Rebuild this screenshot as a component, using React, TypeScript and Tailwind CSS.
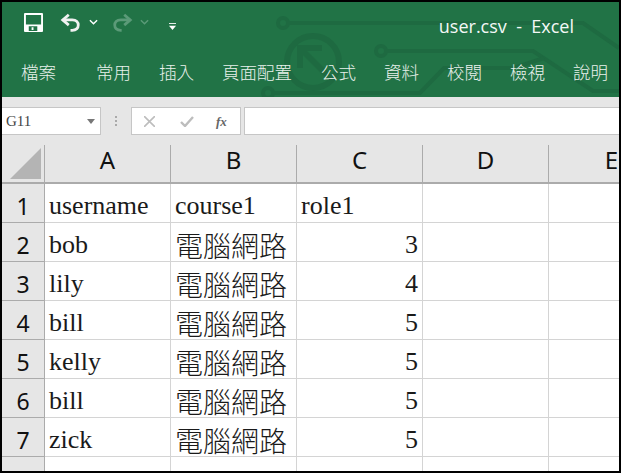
import { ReactNode } from "react";

const tabs = [
  { label: "檔案", w: "w-[75px]" },
  { label: "常用", w: "w-[63px]" },
  { label: "插入", w: "w-[63px]" },
  { label: "頁面配置", w: "w-[99px]" },
  { label: "公式", w: "w-[63px]" },
  { label: "資料", w: "w-[63px]" },
  { label: "校閱", w: "w-[63px]" },
  { label: "檢視", w: "w-[63px]" },
  { label: "說明", w: "w-[63px]" },
];

const rows = [
  ["username", "course1", "role1"],
  ["bob", "電腦網路", "3"],
  ["lily", "電腦網路", "4"],
  ["bill", "電腦網路", "5"],
  ["kelly", "電腦網路", "5"],
  ["bill", "電腦網路", "5"],
  ["zick", "電腦網路", "5"],
];

function CircuitBg() {
  return (
    <svg className="absolute inset-0 h-full w-full" viewBox="0 0 617 95" fill="none" stroke="#1e6a41" strokeWidth="4">
      <circle cx="281" cy="21" r="5" />
      <path d="M286 21h295l36 25" />
      <circle cx="311" cy="60" r="26" strokeWidth="6" />
      <path d="M298 66V46h22M298 46l30 30" strokeWidth="6" />
      <circle cx="379" cy="49" r="5" />
      <path d="M384 49h147l60 40h30" />
      <circle cx="266" cy="91" r="5" />
      <path d="M271 91h147l24-25h70l30-10" />
    </svg>
  );
}

function QuickAccess() {
  return (
    <div className="relative flex items-center h-[40px] pl-[22px]">
      {/* save */}
      <svg width="19" height="19" viewBox="0 0 20 20">
        <path fillRule="evenodd" fill="#fff" d="M0 1a1 1 0 0 1 1-1h18a1 1 0 0 1 1 1v18a1 1 0 0 1-1 1H1a1 1 0 0 1-1-1zM2 2v10h16V2zM5 14v5h9v-5zM8 15h2v3H8z" />
      </svg>
      {/* undo */}
      <svg className="ml-[17px]" width="21" height="19" viewBox="0 0 24 22" fill="none" stroke="#f1f1f1" strokeWidth="3.2">
        <path d="M10 2 3 8l7 6" />
        <path d="M3 8h11c5 0 7 3 7 6s-2 6-7 6h-2" />
      </svg>
      <svg className="ml-[8px]" width="9" height="6" viewBox="0 0 10 6" fill="none" stroke="#fff" strokeWidth="1.6">
        <path d="m1 1 4 4 4-4" />
      </svg>
      {/* redo (disabled) */}
      <svg className="ml-[14px]" width="21" height="19" viewBox="0 0 24 22" fill="none" stroke="#5b9a78" strokeWidth="3.2">
        <path d="m14 2 7 6-7 6" />
        <path d="M21 8H10c-5 0-7 3-7 6s2 6 7 6h1" />
      </svg>
      <svg className="ml-[7px]" width="9" height="6" viewBox="0 0 10 6" fill="none" stroke="#5b9a78" strokeWidth="1.6">
        <path d="m1 1 4 4 4-4" />
      </svg>
      {/* customize */}
      <svg className="ml-[20px] mt-[9px]" width="7" height="7" viewBox="0 0 8 8" fill="#fff">
        <rect x="0" y="0" width="8" height="1" />
        <path d="M0 3h8L4 8z" />
      </svg>
      <span className="ml-auto mr-[45px] mt-[8px] text-[18px] leading-none text-[#f4f8f6] whitespace-pre font-['Open_Sans',sans-serif]">
        user.csv  -  Excel
      </span>
    </div>
  );
}

function FormulaBar() {
  return (
    <div className="flex h-[48px] bg-[#e6e6e6] pt-[10px] pb-[10px] items-stretch">
      <div className="flex w-[99px] items-center justify-between bg-white border border-[#c6c6c6] border-l-0 pl-[4px] pr-[5px] text-[15px] text-[#444] font-['Liberation_Serif',serif]">
        <span>G11</span>
        <svg width="8" height="5" viewBox="0 0 8 5" fill="#777">
          <path d="M0 0h8L4 5z" />
        </svg>
      </div>
      <div className="flex w-[30px] flex-col items-center justify-center gap-[2px]">
        <i className="h-[2px] w-[2px] bg-[#aaa]" />
        <i className="h-[2px] w-[2px] bg-[#aaa]" />
        <i className="h-[2px] w-[2px] bg-[#aaa]" />
      </div>
      <div className="flex w-[110px] items-center bg-white border border-[#c6c6c6] pl-[12px]">
        <svg width="11" height="11" viewBox="0 0 11 11" stroke="#bdbdbd" strokeWidth="1.6">
          <path d="m0 0 11 11M11 0 0 11" />
        </svg>
        <svg className="ml-[25px]" width="14" height="11" viewBox="0 0 14 11" fill="none" stroke="#bdbdbd" strokeWidth="2.4">
          <path d="m1 6 4 4 8-9" />
        </svg>
        <span className="ml-[22px] text-[13px] italic font-bold text-[#666] font-['Liberation_Serif',serif] leading-none">
          fx
        </span>
      </div>
      <div className="ml-[3px] flex-1 bg-white border border-[#c6c6c6] border-r-0" />
    </div>
  );
}

function Cell({ children, right }: { children?: ReactNode; right?: boolean }) {
  return (
    <div
      className={`w-[126px] shrink-0 border-r border-b border-[#d4d4d4] leading-none whitespace-nowrap flex items-center pt-[5px] ${
        right ? "justify-end pr-[4px]" : "pl-[4px]"
      }`}
    >
      {children}
    </div>
  );
}

function RowHead({ children }: { children?: ReactNode }) {
  return (
    <div className="w-[43px] shrink-0 h-[39px] bg-[#e6e6e6] border-r border-b border-[#ababab] flex items-center justify-center pt-[6px] text-[23px] leading-none text-[#111] font-['Noto_Sans',sans-serif]">
      {children}
    </div>
  );
}

function Sheet() {
  return (
    <div className="flex-1 overflow-hidden bg-white">
      <div className="flex h-[39px] bg-[#e6e6e6] border-b-2 border-[#ababab]">
        <div className="relative w-[43px] shrink-0 border-r border-[#ababab]">
          <svg className="absolute right-[3px] bottom-[3px]" width="31" height="31" viewBox="0 0 31 31" fill="#b4b4b4">
            <path d="M31 0v31H0z" />
          </svg>
        </div>
        {["A", "B", "C", "D", "E"].map((c) => (
          <div
            key={c}
            className="w-[126px] shrink-0 border-r border-[#ababab] flex items-center justify-center text-[24px] leading-none text-[#111] font-['Noto_Sans',sans-serif]"
          >
            <span className="-translate-y-[4px]">{c}</span>
          </div>
        ))}
      </div>
      {rows.map((r, i) => (
        <div key={i} className="flex h-[39px] text-[26px] text-[#1a1a1a] font-['Liberation_Serif','Noto_Sans_CJK_TC',serif]">
          <RowHead>{i + 1}</RowHead>
          <Cell>{r[0]}</Cell>
          <Cell>
            {i > 0 ? <span className="text-[28px] font-light font-['Noto_Sans_CJK_TC',serif]">{r[1]}</span> : r[1]}
          </Cell>
          <Cell right={i > 0}>{r[2]}</Cell>
          <Cell />
          <Cell />
        </div>
      ))}
      <div className="flex h-[39px]">
        <RowHead>8</RowHead>
        <Cell />
        <Cell />
        <Cell />
        <Cell />
        <Cell />
      </div>
    </div>
  );
}

export default function App() {
  return (
    <div className="w-[621px] h-[473px] overflow-hidden bg-black p-[2px]">
      <div className="flex h-full flex-col overflow-hidden bg-white">
        <div className="relative h-[95px] bg-[#217346] overflow-hidden">
          <CircuitBg />
          <QuickAccess />
          <div className="relative mt-[17px] flex text-[17.5px] text-[#e9f1ec] font-['Noto_Sans_CJK_TC',sans-serif]">
            {tabs.map((t) => (
              <div key={t.label} className={`${t.w} shrink-0 pl-[19px] font-light whitespace-nowrap`}>
                {t.label}
              </div>
            ))}
          </div>
        </div>
        <FormulaBar />
        <Sheet />
      </div>
    </div>
  );
}
